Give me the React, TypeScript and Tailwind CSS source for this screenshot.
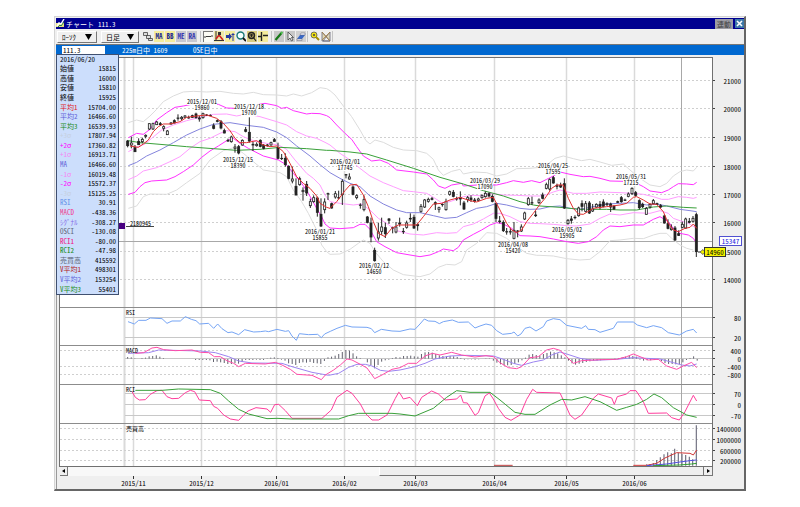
import type { ReactNode } from "react";
import clsx from "clsx";

const FONT = "font-['Noto_Sans_Mono_CJK_JP','Noto_Sans_CJK_JP',sans-serif]";

// series points are stored in thirds of a pixel, one part per stretch of the chart: [x offset, points]
type Part = [number, string];
type Candle = [number, number, number, number, number, 0 | 1];

interface Series {
  color: string;
  width?: number;
  parts: Part[];
}

const MONTHS = [
  { x: 133.5, label: "2015/11" },
  { x: 201.5, label: "2015/12" },
  { x: 276.5, label: "2016/01" },
  { x: 344.5, label: "2016/02" },
  { x: 415.5, label: "2016/03" },
  { x: 494.5, label: "2016/04" },
  { x: 566.5, label: "2016/05" },
  { x: 634.5, label: "2016/06" },
];

const PRICES = [
  { y: 80.5, label: "21000" },
  { y: 108.5, label: "20000" },
  { y: 137.5, label: "19000" },
  { y: 166.5, label: "18000" },
  { y: 194.5, label: "17000" },
  { y: 222.5, label: "16000" },
  { y: 251.5, label: "15000" },
  { y: 279.5, label: "14000" },
];

const LOWER = [
  { y: 317.5, label: "80", dashed: false },
  { y: 337.5, label: "20", dashed: false },
  { y: 350.5, label: "400", dashed: true },
  { y: 358.5, label: "0", dashed: false },
  { y: 366.5, label: "-400", dashed: true },
  { y: 374.5, label: "-800", dashed: true },
  { y: 393.5, label: "70", dashed: false },
  { y: 404.5, label: "0", dashed: false },
  { y: 415.5, label: "-70", dashed: false },
  { y: 428.5, label: "1400000", dashed: true },
  { y: 439.5, label: "1000000", dashed: true },
  { y: 450.5, label: "600000", dashed: true },
  { y: 460.5, label: "200000", dashed: true },
];

const PANES = [
  { y: 307.5, label: "RSI" },
  { y: 345.5, label: "MACD" },
  { y: 384.5, label: "RCI" },
  { y: 423.5, label: "売買高" },
];

const NOTES = [
  { x: 202, y: 102, date: "2015/12/01", price: "19860" },
  { x: 249, y: 107, date: "2015/12/18", price: "19700" },
  { x: 238, y: 160, date: "2015/12/15", price: "18390" },
  { x: 320, y: 232, date: "2016/01/21", price: "15855" },
  { x: 345, y: 162, date: "2016/02/01", price: "17745" },
  { x: 374, y: 266, date: "2016/02/12", price: "14650" },
  { x: 485, y: 181, date: "2016/03/29", price: "17090" },
  { x: 513, y: 245, date: "2016/04/08", price: "15420" },
  { x: 553, y: 166, date: "2016/04/25", price: "17595" },
  { x: 567, y: 230, date: "2016/05/02", price: "15905" },
  { x: 631, y: 177, date: "2016/05/31", price: "17215" },
];

const PRICE_SERIES: Series[] = [
  {
    color: "#dcdcdc",
    parts: [
      [0, "25,158 50,150 70,155 90,138 110,118 130,95 160,78 190,66 220,64 260,66 300,64 340,70 370,72 400,67 430,74 470,75 500,78 520,72 545,78 575,68 600,53 620,56"],
      [630, "0,62 15,75 40,108 65,140 90,180 108,212 120,222 135,210 160,217 190,232 220,240 260,242 290,250 310,268 325,300 340,316 365,304 390,298 400,312 430,306 470,308 500,318 530,312 560,296 600,295"],
      [1260, "0,292 20,285 45,265 70,258 100,266 125,272 150,268 180,276 215,286 250,282 270,300 300,325 330,345 360,350 380,340 400,318 420,305 440,300 460,303 470,292"],
    ],
  },
  {
    color: "#dcdcdc",
    parts: [
      [0, "25,415 50,408 70,380 90,372 140,373 170,360 200,338 240,310 270,270 310,242 345,232 370,250 400,275 430,300 480,308 500,320 520,360 545,395 565,430 590,480 605,525 620,545"],
      [630, "0,553 30,552 60,538 85,520 100,510 120,520 135,545 160,575 190,600 220,614 270,620 300,612 325,592 350,583 375,585 395,575 410,540 440,520 470,488 500,490 530,505 560,530 590,550 620,556"],
      [1260, "0,556 40,558 80,566 120,570 150,568 180,545 210,512 240,510 280,505 310,506 340,495 360,490 380,490 395,505 420,525 440,535 460,540"],
    ],
  },
  {
    color: "#ff9cff",
    parts: [
      [0, "25,245 50,232 75,222 95,205 125,180 160,165 200,152 240,142 280,133 320,132 350,138 380,132 420,140 470,155 500,165 530,185 560,198 590,205 615,217"],
      [630, "0,225 30,250 60,270 90,295 120,318 160,338 190,350 220,362 250,365 290,370 315,385 335,398 360,395 400,380 430,376 460,378 480,370 520,375 560,376 600,378 620,378"],
      [1260, "0,378 20,374 40,366 60,360 100,370 140,370 180,366 240,368 280,370 310,373 340,380 365,388 385,388 415,380 440,382 460,385 470,382"],
    ],
  },
  {
    color: "#ff9cff",
    parts: [
      [0, "25,329 50,318 70,303 110,293 150,275 180,260 210,235 240,215 270,205 300,190 320,182 345,185 370,200 400,212 440,220 475,225 500,238 525,270 560,310 580,325 600,345 615,375"],
      [630, "0,395 30,400 70,405 95,402 120,420 145,445 170,460 200,482 240,492 280,495 320,488 350,490 380,488 400,470 430,462 460,447 490,430 510,430 540,440 570,455 600,460"],
      [1260, "0,461 40,463 80,467 110,468 150,462 180,445 210,432 240,435 280,428 330,430 360,422 385,430 400,445 420,452 445,460 470,475"],
    ],
  },
  {
    color: "#8484dc",
    parts: [
      [0, "25,287 50,277 80,258 120,240 160,218 200,195 240,177 280,163 330,158 380,166 430,172 470,186 500,203 530,228 570,258 600,284"],
      [630, "0,308 30,325 60,340 90,350 120,378 160,402 200,420 230,428 270,428 310,437 345,445 380,442 410,428 440,415 470,410 500,400 530,405 570,415 600,418"],
      [1260, "0,417 30,410 60,408 90,415 120,418 150,412 200,402 240,400 280,398 320,405 350,402 380,408 420,418 450,422 470,425"],
    ],
  },
  {
    color: "#ff30ff",
    parts: [
      [0, "25,203 50,190 70,193 90,178 110,150 140,128 165,112 190,108 215,103 240,98 295,103 320,114 345,115 390,108 435,100 470,107 485,115 500,112 520,122 560,132 575,130 600,131 620,137"],
      [630, "0,143 20,165 45,190 65,208 80,230 100,258 125,273 150,270 175,280 200,300 250,306 290,312 310,330 325,348 345,355 365,345 395,340 400,348 440,345 500,345 530,338 550,332 580,337 605,332"],
      [1260, "0,338 20,328 40,318 60,306 90,313 130,320 150,319 180,325 210,333 250,334 290,340 310,350 330,363 365,368 385,360 400,350 415,341 440,342 460,344 470,337"],
    ],
  },
  {
    color: "#ff30ff",
    parts: [
      [0, "25,373 45,367 60,350 75,338 95,333 140,330 165,320 190,305 220,285 245,262 270,243 295,228 320,212 340,205 360,220 385,235 430,258 475,270 500,285 520,310 545,340 565,370 590,415 605,440 615,462"],
      [630, "0,474 30,476 70,473 90,463 105,463 120,478 140,515 165,530 200,548 240,555 270,560 300,555 325,545 340,537 370,542 385,532 400,510 430,493 455,480 480,465 500,458 520,462 545,475 570,497 600,498"],
      [1260, "0,500 40,507 80,515 115,520 145,515 170,500 190,480 210,468 240,470 280,465 310,465 340,448 360,440 385,455 400,475 420,490 445,495 460,505 470,520"],
    ],
  },
  {
    color: "#38a038",
    parts: [
      [0, "25,212 60,218 120,223 200,230 280,236 350,241 420,238 480,232 560,236 620,241"],
      [630, "0,241 60,246 110,252 170,270 250,295 330,322 400,342 460,362 520,378 570,395 610,405"],
      [1260, "0,408 60,412 120,418 200,418 240,420 290,420 340,411 380,408 430,412 470,414"],
    ],
  },
];

const RED_MA: Series = {
  color: "#e03030",
  parts: [
    [0, "30,228 55,232 70,222 85,210 100,185 115,170 130,162 150,162 180,155 200,142 230,138 260,135 290,145 310,160 330,182 345,205 360,218 380,218 410,212 430,225 450,230 470,228 490,245 510,280 530,320 550,340 570,355 590,378 600,400 620,412"],
    [630, "0,415 20,395 45,362 60,345 80,343 100,375 115,410 130,455 145,490 165,500 185,475 205,465 260,465 280,440 310,402 335,400 360,390 390,382 420,392 440,396 470,385 490,382 510,420 530,460 545,480 560,488 575,480 590,455 610,430"],
    [1260, "0,403 15,385 35,355 50,345 70,345 85,385 100,415 115,432 130,433 160,415 200,410 240,405 260,400 280,382 290,380 310,390 330,402 350,403 370,425 385,460 400,480 415,485 435,475 450,472 460,462 470,475"],
  ],
};

// x, high, body top, body bottom, low, filled
const CANDLES: [number, Candle[]][] = [
  [0, [
    [23, 210, 212, 228, 232, 1], [34, 200, 218, 226, 235, 0], [45, 225, 232, 246, 246, 1], [56, 205, 213, 225, 225, 1],
    [67, 203, 207, 216, 220, 0], [77, 193, 195, 200, 205, 0], [88, 160, 160, 178, 180, 0], [99, 158, 160, 178, 180, 0],
    [110, 153, 155, 165, 165, 0], [121, 156, 160, 165, 165, 1], [131, 166, 169, 176, 184, 0], [142, 180, 182, 195, 195, 0],
    [153, 156, 158, 163, 164, 0], [163, 148, 151, 160, 160, 1], [174, 133, 143, 145, 152, 1], [185, 138, 141, 147, 152, 0],
    [195, 135, 137, 143, 143, 0], [206, 137, 142, 145, 146, 1], [217, 134, 136, 143, 143, 1], [228, 128, 131, 144, 146, 1],
    [238, 138, 143, 148, 155, 1], [249, 128, 130, 144, 146, 0], [260, 132, 134, 137, 138, 1], [271, 133, 135, 138, 138, 1],
    [281, 160, 166, 176, 178, 1], [292, 148, 151, 155, 157, 1], [303, 150, 154, 175, 178, 1], [313, 176, 181, 190, 190, 1],
    [324, 206, 210, 214, 216, 1], [334, 197, 200, 216, 218, 0], [345, 222, 230, 236, 248, 0], [356, 225, 229, 250, 253, 1],
    [367, 208, 210, 226, 227, 0], [377, 171, 178, 185, 187, 1], [388, 142, 186, 214, 218, 1], [399, 216, 222, 226, 243, 1],
    [410, 217, 222, 228, 230, 0], [421, 208, 210, 230, 232, 1], [431, 222, 225, 236, 238, 1], [442, 222, 224, 228, 230, 0],
    [453, 215, 217, 226, 227, 0], [463, 204, 208, 215, 215, 1], [474, 218, 232, 266, 268, 1], [485, 252, 264, 267, 270, 1],
    [496, 250, 264, 285, 290, 1], [506, 286, 288, 326, 328, 1], [517, 290, 326, 334, 340, 0], [528, 325, 348, 376, 376, 1],
    [539, 320, 325, 345, 347, 0], [549, 352, 360, 366, 392, 0], [560, 333, 342, 370, 378, 1], [571, 386, 394, 408, 414, 0],
    [581, 376, 382, 396, 398, 0], [592, 380, 383, 428, 440, 1], [603, 385, 432, 469, 471, 1], [614, 385, 395, 420, 430, 0],
    [624, 368, 370, 373, 390, 1],
  ]],
  [630, [
    [5, 398, 400, 415, 416, 1], [16, 363, 370, 382, 386, 0], [26, 362, 382, 385, 388, 1], [37, 328, 333, 375, 405, 0],
    [48, 312, 313, 316, 325, 1], [58, 310, 320, 328, 329, 0], [69, 346, 350, 374, 376, 1], [80, 373, 376, 384, 388, 0],
    [91, 400, 404, 407, 416, 1], [102, 376, 388, 420, 424, 0], [112, 438, 440, 458, 460, 1], [123, 443, 458, 502, 517, 1],
    [134, 533, 540, 573, 575, 1], [145, 458, 485, 505, 512, 0], [155, 443, 470, 485, 495, 0], [166, 458, 472, 492, 504, 1],
    [177, 444, 446, 452, 462, 1], [188, 470, 472, 475, 490, 1], [198, 456, 470, 487, 490, 0], [209, 443, 458, 463, 470, 1],
    [220, 474, 483, 486, 492, 1], [230, 452, 458, 473, 476, 0], [241, 430, 444, 448, 456, 1], [252, 434, 441, 475, 477, 1],
    [263, 460, 463, 468, 482, 1], [273, 402, 408, 425, 428, 0], [284, 387, 389, 412, 414, 0], [295, 383, 387, 395, 398, 0],
    [306, 381, 385, 389, 391, 1], [316, 394, 397, 403, 420, 1], [327, 410, 412, 419, 428, 0], [337, 400, 402, 405, 410, 1],
    [348, 386, 394, 420, 422, 0], [359, 362, 364, 374, 377, 0], [370, 360, 366, 380, 382, 1], [380, 380, 385, 388, 392, 1],
    [391, 364, 382, 388, 406, 1], [402, 393, 398, 418, 420, 1], [413, 378, 382, 390, 397, 0], [423, 376, 383, 390, 396, 1],
    [434, 384, 389, 395, 398, 1], [445, 383, 386, 392, 394, 0], [456, 373, 376, 384, 386, 0], [466, 364, 369, 381, 383, 0],
    [477, 367, 370, 379, 382, 1], [487, 373, 378, 395, 397, 1], [498, 398, 400, 446, 456, 1], [509, 438, 452, 456, 460, 1],
    [520, 451, 456, 483, 486, 1], [530, 474, 484, 487, 494, 1], [541, 474, 484, 487, 494, 1], [552, 456, 480, 506, 508, 0],
    [563, 480, 482, 485, 502, 1], [574, 463, 470, 484, 486, 0], [584, 425, 428, 448, 450, 0], [595, 381, 385, 405, 407, 0],
    [606, 380, 397, 400, 405, 1], [617, 423, 434, 438, 441, 1], [627, 385, 389, 399, 402, 0], [638, 368, 374, 386, 388, 1],
  ]],
  [1260, [
    [19, 338, 343, 356, 358, 0], [29, 325, 328, 358, 362, 0], [40, 318, 322, 340, 341, 1], [51, 341, 346, 350, 358, 1],
    [62, 338, 345, 352, 354, 1], [73, 325, 340, 415, 417, 1], [84, 447, 450, 462, 464, 0], [94, 438, 446, 452, 461, 1],
    [105, 436, 441, 443, 448, 1], [116, 410, 413, 438, 440, 0], [126, 391, 400, 410, 424, 1], [137, 393, 400, 425, 427, 0],
    [148, 393, 398, 430, 432, 1], [158, 402, 416, 424, 426, 0], [169, 400, 402, 412, 414, 0], [180, 393, 402, 410, 418, 1],
    [190, 388, 395, 410, 412, 1], [201, 397, 400, 405, 408, 0], [212, 398, 401, 412, 426, 1], [222, 405, 408, 418, 420, 1],
    [233, 392, 394, 398, 399, 1], [244, 378, 382, 396, 398, 1], [255, 386, 389, 391, 393, 1], [265, 367, 371, 380, 382, 0],
    [276, 352, 354, 372, 375, 0], [287, 363, 367, 377, 380, 1], [298, 388, 391, 414, 418, 1], [308, 398, 402, 411, 414, 1],
    [319, 411, 414, 434, 434, 0], [330, 400, 402, 412, 416, 0], [340, 387, 391, 402, 403, 0], [351, 398, 400, 404, 405, 1],
    [362, 402, 406, 412, 414, 1], [373, 434, 437, 460, 461, 1], [384, 448, 460, 476, 478, 1], [394, 463, 473, 480, 482, 0],
    [405, 468, 473, 511, 513, 1], [416, 481, 490, 497, 498, 1], [427, 455, 462, 473, 475, 0], [437, 443, 446, 475, 477, 0],
    [448, 444, 453, 458, 460, 1], [459, 438, 444, 455, 457, 0], [469, 428, 433, 546, 561, 1],
  ]],
];

const LOWER_SERIES: Series[] = [
  {
    color: "#74a4f4",
    parts: [
      [0, "228,65 247,72 260,61 282,61 295,54 330,56 345,70 360,63 385,63 400,50 418,58 432,62 443,72 470,70 485,85 497,72 510,86 528,98 540,96 560,104 578,89 605,96 625,95 640,93 650,95 675,88 700,94 710,92 720,108 733,121 742,101 770,104 797,103 808,113 818,102 835,94 855,85 880,76 900,81 945,82 958,86 968,98 988,88 1020,93"],
      [1044, "0,94 30,87 45,88 60,72 73,57 85,63 105,64 118,71 130,65 157,60 175,67 205,66 225,84 240,78 258,72 275,76 290,92 308,103 335,100 342,96 353,108 363,102 375,85 390,81 408,93 430,80 440,63 460,56 480,59 500,76 545,85 557,77 565,88 585,89 600,97 640,85 652,66 700,66 712,75 740,83 760,77 785,83 805,98 838,105 860,93 880,88 890,99"],
    ],
  },
  {
    color: "#9c84f0",
    parts: [
      [0, "228,160 290,158 320,150 445,153 490,158 530,170 560,183 600,189 690,190 720,200 780,217 830,226 860,220 890,202 915,193 940,193 960,198 985,211 1010,214"],
      [1044, "0,210 45,200 75,190 105,177 150,168 200,166 280,168 310,178 340,190 365,196 400,186 430,180 455,165 480,156 500,162 540,175 580,181 650,178 700,173 740,175 780,177 820,188 845,195 870,198 890,192"],
    ],
  },
  {
    color: "#ff4ca8",
    parts: [
      [0, "250,160 275,158 300,144 315,142 335,149 370,152 420,150 445,157 470,158 487,170 505,170 525,182 545,190 560,200 580,190 640,192 670,187 690,195 715,208 735,223 780,226 808,239 820,225 845,210 865,195 885,177 900,180 925,193 945,204 968,236 990,225 1020,208"],
      [1044, "0,203 25,190 50,190 75,168 97,160 120,165 155,157 185,165 225,171 258,167 280,170 300,188 325,203 350,206 365,200 390,173 415,170 440,150 460,145 480,151 500,170 520,190 545,182 600,179 650,178 680,170 700,162 720,170 745,180 775,178 800,198 830,208 850,198 875,187 890,203"],
    ],
  },
  {
    color: "#ff3c9c",
    parts: [
      [0, "240,275 250,292 262,300 280,299 295,283 315,272 330,271 345,290 360,296 380,295 400,278 415,271 428,275 442,300 475,302 485,319 497,325 515,345 535,357 560,361 575,345 588,333 612,323 645,327 656,337 668,314 680,313 700,332 720,355 765,355 810,355 838,330 855,292 885,271 900,280 925,312 940,340 960,360 980,360 1005,345 1030,295 1040,277"],
      [1044, "0,280 10,297 30,292 52,317 65,292 95,273 115,282 135,300 170,297 182,285 190,308 202,309 225,346 235,338 255,288 268,279 280,297 295,325 315,352 333,361 360,345 380,298 398,268 410,277 480,279 490,300 510,345 525,358 545,345 580,295 595,282 635,294 643,313 652,290 680,282 690,272 708,272 730,305 745,340 800,339 815,353 838,360 855,335 880,286 890,303"],
    ],
  },
  {
    color: "#38a038",
    parts: [
      [0, "250,271 330,271 380,267 475,269 505,280 530,303 560,328 590,342 645,356 675,355 720,357 860,357 890,347 920,340 1020,340"],
      [1044, "0,342 45,348 100,325 140,292 170,272 210,277 270,277 300,300 345,337 375,343 405,343 450,315 485,298 515,300 555,290 600,305 650,331 680,322 710,313 740,298 762,282 785,293 820,323 860,345 890,352"],
    ],
  },
  { color: "#c04040", parts: [[1044, "282,496 338,496"]] },
  { color: "#d03838", parts: [[1044, "700,496 740,496 770,490 795,474 830,458 870,460 880,465 890,450"]] },
  { color: "#5050e0", parts: [[1044, "740,497 800,492 840,486 870,482 890,480"]] },
  { color: "#30a030", parts: [[1044, "760,497 840,495 875,492 890,490"]] },
];

const OSCI: [number, number[]][] = [
  [227, [5, 4, 1, 0, 2, 3, 7, 8, 10, 6, 2, 0, 0, 0, 0, 0, 0, 0, 0, -3, -3, -3, -3, -4, -9, -8, -10, -12, -15, -15, -13, -14, -9, -3, -3, -3, -2, -3, -3, 1, 3, 4, 2, -2, -5, -13, -15, -18, -12, -10, -11, -9, -12, -13, -15, -6]],
  [828, [4, 6, 9, 14, 20, 26, 24, 16, 7, 2, 0, -10, -18, -28, -18, -8, -4, -2, 2, 5]],
  [1044, [4, 8, 8, 9, 7, 6, 14, 19, 20, 18, 14, 10, 8, 7, 8, 7, 5, 2, -2, -1, -1, -2, -1, 0, 1, 1]],
  [1324, [-5, -11, -16, -19, -19, -18, -15, -10, -4, 3, 12, 14, 11, 9, 14, 17, 21, 19, 16, 10, 4, -5, -13, -17, -14, -12, -9, -7, -5, -5, -4, -3, -2, -1, 1, 2, 4, 6, 8, 8, 6, -2, -5, -4, -4, -3, -3, -6, -12, -15, -15, -16, -15, -10, -3, 2, 7, -5]],
];

const VOLUME = [
  [740, 493], [750, 492], [760, 489], [770, 480], [781, 472], [792, 463], [803, 457], [814, 460],
  [824, 446], [835, 458], [846, 462], [857, 465], [868, 470], [878, 478], [889, 376],
];

const READOUT = [
  { label: "始値", value: "15815", color: "text-black" },
  { label: "高値", value: "16000", color: "text-black" },
  { label: "安値", value: "15810", color: "text-black" },
  { label: "終値", value: "15925", color: "text-black" },
  { label: "平均1", value: "15704.00", color: "text-[#e02020]" },
  { label: "平均2", value: "16466.60", color: "text-[#6060d8]" },
  { label: "平均3", value: "16539.93", color: "text-[#208c20]" },
  { label: "+3σ", value: "17807.94", color: "text-[#c6d0e0]" },
  { label: "+2σ", value: "17360.82", color: "text-[#ff00ff]" },
  { label: "+1σ", value: "16913.71", color: "text-[#f488f4]" },
  { label: "MA", value: "16466.60", color: "text-[#6060d8]" },
  { label: "-1σ", value: "16019.48", color: "text-[#f488f4]" },
  { label: "-2σ", value: "15572.37", color: "text-[#ff00ff]" },
  { label: "-3σ", value: "15125.25", color: "text-[#c6d0e0]" },
  { label: "RSI", value: "30.91", color: "text-[#6090e8]" },
  { label: "MACD", value: "-438.36", color: "text-[#f03c90]" },
  { label: "ｼｸﾞﾅﾙ", value: "-308.27", color: "text-[#8468e8]" },
  { label: "OSCI", value: "-130.08", color: "text-[#606878]" },
  { label: "RCI1", value: "-80.00", color: "text-[#f0107c]" },
  { label: "RCI2", value: "-47.98", color: "text-[#108810]" },
  { label: "売買高", value: "415592", color: "text-[#606878]" },
  { label: "V平均1", value: "498301", color: "text-[#b02020]" },
  { label: "V平均2", value: "153254", color: "text-[#6060d8]" },
  { label: "V平均3", value: "55401", color: "text-[#208c20]" },
];

function toPoints(parts: Part[]) {
  return parts
    .flatMap(([dx, pts]) =>
      pts.split(" ").map((p) => {
        const [x, y] = p.split(",").map(Number);
        return `${x + dx},${y}`;
      })
    )
    .join(" ");
}

function Line({ series }: { series: Series }) {
  return (
    <polyline
      points={toPoints(series.parts)}
      fill="none"
      stroke={series.color}
      strokeWidth={(series.width ?? 1) * 3}
      strokeLinejoin="round"
    />
  );
}

function Candles() {
  return (
    <g stroke="#222" strokeWidth={3}>
      {CANDLES.map(([dx, list]) =>
        list.map(([x, high, top, bottom, low, filled]) => (
          <g key={x + dx}>
            <line x1={x + dx} x2={x + dx} y1={high} y2={low} />
            <rect
              x={x + dx - 3}
              y={top + 1}
              width={6}
              height={Math.max(bottom - top - 2, 1)}
              strokeWidth={2.5}
              fill={filled ? "#222" : "#fff"}
            />
          </g>
        ))
      )}
    </g>
  );
}

function ToolButton({ label, tone, children }: { label: string; tone?: string; children: ReactNode }) {
  return (
    <button type="button" aria-label={label} className={clsx("h-[11px] w-[11px] border-r border-[#efefef]", tone)}>
      <svg viewBox="0 0 10 11" className="block h-full w-full" fill="none">
        {children}
      </svg>
    </button>
  );
}

function Glyphs({ text, color }: { text: string; color: string }) {
  return (
    <text x={5} y={8} fontSize={7} fontWeight={700} textAnchor="middle" fill={color}>
      {text}
    </text>
  );
}

function Divider() {
  return <span className="mx-[2px] h-[11px] w-px bg-[#c4c4c4]" />;
}

function PickList({ label, value, options, width }: { label: string; value: string; options: string[]; width: string }) {
  return (
    <label
      className={clsx(
        "flex h-3 items-center justify-between border border-t-white border-l-white border-r-[#777] border-b-[#777] bg-[#efefef] px-1",
        width
      )}
    >
      <select
        aria-label={label}
        defaultValue={value}
        className="w-5 appearance-none bg-transparent p-0 text-[7px] leading-[10px] outline-none"
      >
        {options.map((o) => (
          <option key={o}>{o}</option>
        ))}
      </select>
      <svg viewBox="0 0 7 6" className="h-[6px] w-[7px]">
        <path d="M0 0h7L3.5 6z" fill="#000" />
      </svg>
    </label>
  );
}

function TitleBar() {
  return (
    <header className="flex h-[11px] items-center bg-[#000090] text-[7px] leading-[10px] text-white">
      <svg viewBox="0 0 9 9" className="h-[9px] w-[9px]">
        <path d="M0 4h8v4H0z" fill="#e8e080" />
        <path d="M1 7l2-3 2 1 3-5" fill="none" stroke="#fff" strokeWidth="1.4" />
        <path d="M2 8l2-2 1 1 3-4" fill="none" stroke="#208050" strokeWidth="1" />
      </svg>
      <h1 className="ml-px w-8 whitespace-nowrap">チャート</h1>
      <span>111.3</span>
      <button type="button" className="ml-auto h-[10px] w-[18px] bg-[#9c9ca4] text-[7px] leading-[10px] text-[#404040]">
        連動
      </button>
      <button type="button" aria-label="閉じる" className="ml-[2px] h-[9px] w-[9px] bg-[#3c78a8]">
        <svg viewBox="0 0 9 9" className="h-full w-full">
          <path d="M2 2l5 5M7 2L2 7" stroke="#fff" strokeWidth="1.6" />
        </svg>
      </button>
    </header>
  );
}

function ToolBar() {
  return (
    <div className="flex h-[15px] items-center bg-[#efefef] pl-px">
      <PickList label="チャート種類" value="ﾛｰｿｸ" options={["ﾛｰｿｸ", "ﾊﾞｰ", "ﾗｲﾝ"]} width="w-10" />
      <span className="w-1" />
      <PickList label="足種" value="日足" options={["日足", "週足", "月足"]} width="w-[38px]" />
      <span className="ml-1 flex items-center">
        <ToolButton label="ウィンドウ整列">
          <path d="M.5 1.5h4v3h-4zM3.5 4.5h4v3h-4zM5.5 7.5h4v2h-4z" fill="#ddd" stroke="#444" strokeWidth=".8" />
        </ToolButton>
        <ToolButton label="移動平均" tone="bg-[#f4ec9c]">
          <Glyphs text="MA" color="#202890" />
        </ToolButton>
        <ToolButton label="ボリンジャーバンド" tone="bg-[#f4ec9c]">
          <Glyphs text="BB" color="#202890" />
        </ToolButton>
        <ToolButton label="エンベロープ" tone="bg-[#c8c8d0]">
          <Glyphs text="ME" color="#3838b0" />
        </ToolButton>
        <ToolButton label="レンジ分析" tone="bg-[#c8c8d0]">
          <Glyphs text="RA" color="#3838b0" />
        </ToolButton>
      </span>
      <Divider />
      <span className="flex items-center">
        <ToolButton label="値動き" tone="bg-[#fbfbf4]">
          <path d="M0 .5h10M.5 0v11" stroke="#777" />
          <path d="M1 6h2l1-1 1 1 1-1 1 1 1-1h2" stroke="#222" strokeWidth=".9" />
        </ToolButton>
        <ToolButton label="トレンド" tone="bg-[#f0e8a8]">
          <path d="M2 0v10M0 9.5h10" stroke="#333" />
          <path d="M2 8l3-4 4 5" stroke="#d02020" strokeWidth="1.6" />
          <path d="M4 1h3v3H4z" fill="#333" />
        </ToolButton>
        <ToolButton label="売買サイン" tone="bg-[#f4ec9c]">
          <path d="M1 4h3V2l3 3.500L4 9V7H1z" fill="#2838a0" />
          <path d="M8 2v8M6.5 3.5h3" stroke="#2838a0" />
        </ToolButton>
        <ToolButton label="拡大">
          <circle cx="4.5" cy="4.500" r="3.500" fill="#f4ffff" stroke="#187878" strokeWidth="1.4" />
          <path d="M7 7l3 3" stroke="#111" strokeWidth="1.8" />
        </ToolButton>
        <ToolButton label="検索" tone="bg-[#d8cc80]">
          <circle cx="4.5" cy="4.500" r="3" fill="#a89858" stroke="#222" strokeWidth="1.4" />
          <path d="M6 6l3 4M3 4h3M4.500 3v3" stroke="#222" strokeWidth="1.200" />
        </ToolButton>
        <ToolButton label="十字線" tone="bg-[#f4ec9c]">
          <path d="M3.5 1v9M0 5.5h4M5 4.5h5" stroke="#222" strokeWidth="1.4" />
        </ToolButton>
      </span>
      <Divider />
      <span className="flex items-center">
        <ToolButton label="ライン描画" tone="bg-[#c8c8c8]">
          <path d="M1.5 9l6-7" stroke="#187818" strokeWidth="2.2" />
          <path d="M7 2.5L8.5 1" stroke="#50c050" strokeWidth="2" />
        </ToolButton>
        <ToolButton label="選択" tone="bg-[#c8c8c8]">
          <path d="M3 1v8l2-2 1.500 3 1.500-1-1.500-2.500h2z" fill="#f0f0f0" stroke="#444" strokeWidth=".8" />
        </ToolButton>
        <ToolButton label="消去" tone="bg-[#d0d0d0]">
          <path d="M1 8l3-4h5L6 8z" fill="#3868c8" />
          <path d="M1 8h5v1.500H1zM4 4l1-2h4v2z" fill="#f4f4fc" stroke="#667" strokeWidth=".5" />
        </ToolButton>
      </span>
      <span className="h-[11px] w-px bg-[#c4c4c4]" />
      <span className="ml-[2px] flex items-center">
        <ToolButton label="設定">
          <circle cx="4" cy="4" r="3" fill="#f0e010" stroke="#555" strokeWidth=".8" />
          <circle cx="4" cy="4" r="1" fill="#444" />
          <path d="M6 6l3 3" stroke="#a89000" strokeWidth="2" />
        </ToolButton>
        <ToolButton label="比較">
          <path d="M1 1v9h8zM9 1v9L2 10z" fill="#e0d8b8" stroke="#667" strokeWidth=".8" />
          <path d="M1 1l8 9M9 1L1 9" stroke="#a88040" strokeWidth=".8" />
        </ToolButton>
      </span>
      <span className="h-[11px] w-px bg-[#c4c4c4]" />
    </div>
  );
}

function SymbolBar() {
  return (
    <div className="flex h-[10px] items-center bg-[#0068d0] text-[7px] leading-[9px] text-white">
      <input
        aria-label="銘柄コード"
        defaultValue="111.3"
        className="ml-[6px] h-[9px] w-[43px] bg-white px-px py-0 text-[7px] leading-[9px] text-black outline-none"
      />
      <span className="ml-[17px] w-[71px] whitespace-nowrap">225m日中 1609</span>
      <span className="whitespace-nowrap">OSE日中</span>
    </div>
  );
}

function Readout() {
  return (
    <table className="absolute -top-px left-0 h-[241px] w-[63px] border-separate border-spacing-0 border border-[#405070] bg-[#ccdefc] text-[7px] leading-[9px]">
      <thead>
        <tr>
          <th colSpan={2} className="px-[3px] py-0 text-left font-normal">
            2016/06/20
          </th>
        </tr>
      </thead>
      <tbody>
        {READOUT.map((row) => (
          <tr key={row.label}>
            <th className={clsx("py-0 pl-[3px] text-left font-normal whitespace-nowrap", row.color)}>{row.label}</th>
            <td className="py-0 pr-[2px] text-right">{row.value}</td>
          </tr>
        ))}
      </tbody>
    </table>
  );
}

function PriceChart() {
  return (
    <svg viewBox="56 55 688 412" className="block w-full" fontSize={7}>
      <rect x={56} y={55} width={688} height={412} fill="#efefef" />
      <rect x={59.5} y={57.5} width={653} height={409} fill="#fff" />
      <path d="M56.5 55v412" stroke="#9a9a9a" />

      <g stroke="#dadada" strokeWidth={2}>
        <path d="M124.5 58V466" />
        {MONTHS.map((m) => (
          <line key={m.label} x1={m.x} x2={m.x} y1={58} y2={466} strokeWidth={1.5} />
        ))}
      </g>
      {PRICES.map((p) => (
        <g key={p.label}>
          <line x1={120} x2={712} y1={p.y} y2={p.y} stroke="#cfcfcf" strokeDasharray="2 2" />
          <line x1={713} x2={715} y1={p.y} y2={p.y} stroke="#444" />
          <text x={741} y={p.y + 3} textAnchor="end">
            {p.label}
          </text>
        </g>
      ))}
      {LOWER.map((l) => (
        <g key={l.y}>
          <line
            x1={l.dashed ? 60 : 125}
            x2={712}
            y1={l.y}
            y2={l.y}
            stroke={l.dashed ? "#cfcfcf" : "#c8c8c8"}
            strokeDasharray={l.dashed ? "2 2" : undefined}
          />
          <line x1={713} x2={715} y1={l.y} y2={l.y} stroke="#444" />
          <text x={741} y={l.y + 3} textAnchor="end">
            {l.label}
          </text>
        </g>
      ))}
      <path d="M119 241.5H712M681.5 58V466" stroke="#a8a8a8" />

      <g transform="translate(120 70) scale(0.33333)">
        {PRICE_SERIES.map((s, i) => (
          <Line key={i} series={s} />
        ))}
        <Candles />
        <Line series={RED_MA} />
      </g>

      <g transform="translate(52 300) scale(0.33333)">
        {OSCI.map(([start, values]) =>
          values.map((v, i) => (
            <line
              key={start + i * 10.73}
              x1={start + i * 10.73}
              x2={start + i * 10.73}
              y1={v > 0 ? 176 - v : 177}
              y2={v > 0 ? 176 : 177 - v}
              stroke="#60606c"
              strokeWidth={3}
            />
          ))
        )}
        {VOLUME.map(([x, y]) => (
          <line key={x} x1={x + 1044} x2={x + 1044} y1={y} y2={497} stroke="#707080" strokeWidth={3.5} />
        ))}
        {LOWER_SERIES.map((s, i) => (
          <Line key={i} series={s} />
        ))}
      </g>

      {PANES.map((p) => (
        <g key={p.label}>
          <line x1={60} x2={713} y1={p.y} y2={p.y} stroke="#8c8c8c" />
          <text x={126} y={p.y + 7} fontSize={6}>
            {p.label}
          </text>
        </g>
      ))}
      <rect x={59.5} y={57.5} width={653} height={409} fill="none" stroke="#707070" />

      <g fontSize={6} textAnchor="middle">
        {NOTES.map((n) => (
          <g key={n.date}>
            <rect x={n.x - 15} y={n.y - 3} width={30} height={6} fill="#fff" />
            <rect x={n.x - 8} y={n.y + 3} width={16} height={6} fill="#fff" />
            <text x={n.x} y={n.y + 2}>
              {n.date}
            </text>
            <text x={n.x} y={n.y + 8}>
              {n.price}
            </text>
          </g>
        ))}
      </g>

      <rect x={119} y={223} width={6} height={6} fill="#480080" />
      <text x={130} y={226} fontSize={6}>
        2180945
      </text>
      <path d="M126 226.5H154" stroke="#444" />

      <rect x={719.5} y={236.5} width={22} height={9} fill="#fff" stroke="#5050d0" />
      <text x={730.5} y={244} textAnchor="middle" fill="#2020e0">
        15347
      </text>
      <path d="M698 252h2l3-2.500 2 2.500-2 2.500-3-2.500z" fill="#f0f000" stroke="#444" strokeWidth={0.7} />
      <rect x={704.5} y={247.5} width={21} height={9} fill="#f4f400" stroke="#333" />
      <text x={715} y={255} textAnchor="middle">
        14960
      </text>
    </svg>
  );
}

function ScrollStrip() {
  return (
    <div className="flex h-[9px] border-l border-[#9a9a9a] bg-[#efefef] pr-[31px] pl-[3px] text-[5px] leading-[7px]">
      <button type="button" aria-label="左へ" className="flex w-2 items-center justify-center border-r border-b border-[#777]">
        <svg viewBox="0 0 3 4" className="h-1 w-[3px]">
          <path d="M3 0v4L0 2z" />
        </svg>
      </button>
      <div className="flex flex-1 justify-end bg-[#f8f8f8]">
        <div className="h-full w-[51%] border-b border-l border-l-white border-b-[#777] bg-[#efefef]" />
      </div>
      <button type="button" aria-label="右へ" className="flex w-[10px] items-center justify-center border-x border-b border-[#777]">
        <svg viewBox="0 0 3 4" className="h-1 w-[3px]">
          <path d="M0 0v4l3-2z" />
        </svg>
      </button>
    </div>
  );
}

function DateAxis() {
  return (
    <svg viewBox="56 476 688 13" className="block w-full bg-[#efefef]" fontSize={7} textAnchor="middle">
      <path d="M56.5 476v13" stroke="#9a9a9a" />
      {MONTHS.map((m) => (
        <g key={m.label}>
          <line x1={m.x} x2={m.x} y1={476} y2={479} stroke="#333" />
          <text x={m.x} y={486}>
            {m.label}
          </text>
        </g>
      ))}
    </svg>
  );
}

export default function App() {
  return (
    <main className={clsx("min-h-screen bg-white px-[54px] pt-4 text-black", FONT)}>
      <section className="border border-t-[#d4d4d4] border-r-2 border-b-2 border-l-[#d4d4d4] border-r-[#666] border-b-[#666] bg-[#efefef] pt-px pl-px">
        <TitleBar />
        <ToolBar />
        <div className="border-t border-[#777]">
          <SymbolBar />
        </div>
        <div className="relative">
          <PriceChart />
          <Readout />
        </div>
        <ScrollStrip />
        <DateAxis />
      </section>
    </main>
  );
}
